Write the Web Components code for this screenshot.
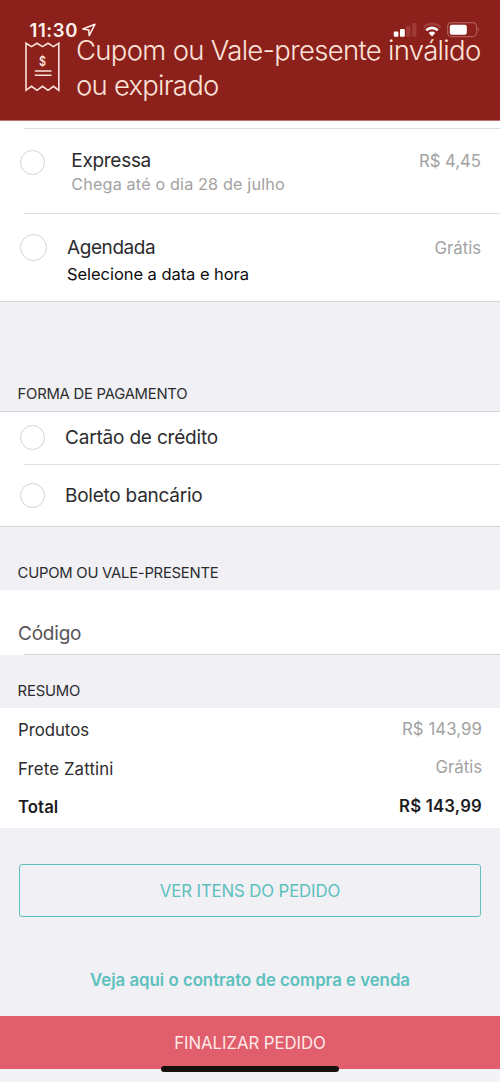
<!DOCTYPE html>
<html lang="pt-BR">
<head>
<meta charset="utf-8">
<title>Finalizar pedido</title>
<style>
html,body{margin:0;padding:0}
body{width:500px;height:1082px;overflow:hidden;background:#f0f0f5;font-family:Inter,"Liberation Sans",sans-serif;color:#2c2c2e}
</style>
</head>
<body>
<checkout-page></checkout-page>
<script>
const define = (name, html, setup) => {
  const tpl = document.createElement('template');
  tpl.innerHTML = html;
  customElements.define(name, class extends HTMLElement {
    constructor() {
      super();
      this.attachShadow({mode: 'open'}).append(tpl.content.cloneNode(true));
    }
    connectedCallback() { if (setup) setup(this, this.shadowRoot); }
  });
};

/* One line of text; "fit" is its width in px, reached by tracking. */
define('text-line', `<style>
:host{display:block;height:24px;line-height:24px;white-space:nowrap}
span{display:inline-block}
</style><span><slot></slot></span>`, (el, root) => {
  const span = root.querySelector('span');
  el.style.fontSize = el.getAttribute('size') + 'px';
  if (el.hasAttribute('weight')) el.style.fontWeight = el.getAttribute('weight');
  if (el.hasAttribute('color')) el.style.color = el.getAttribute('color');
  const fit = parseFloat(el.getAttribute('fit'));
  const n = el.textContent.length;
  span.style.letterSpacing = (fit - span.getBoundingClientRect().width) / n + 'px';
});

define('status-bar', `<style>
:host{display:flex;height:20px;padding:20px 20px 0 29.5px;align-items:flex-start}
text-line{height:20px;line-height:20px;color:#fff0ea}
.nav{margin:3px 0 0 3.5px}
.right{margin-left:auto}
svg{display:block}
</style>
<text-line size="18.5" weight="600" fit="48.5">11:30</text-line>
<svg class="nav" width="15" height="14" viewBox="0 0 15 14"><path d="M.8 6 13 1.2 7.2 12.6 6.8 6.9Z" fill="none" stroke="#fff0ea" stroke-width="1.5" stroke-linejoin="round"/></svg>
<svg class="right" width="87" height="18" viewBox="0 0 87 18">
<g fill="#fff"><rect x=".8" y="11.4" width="4.6" height="5.4" rx="1"/><rect x="7" y="9" width="4.8" height="7.8" rx="1"/></g>
<g fill="#a03c37"><rect x="13.2" y="6" width="4.3" height="10.8" rx="1"/><rect x="19.2" y="3" width="4.2" height="13.8" rx="1"/></g>
<g fill="none"><path d="M30.5 7.2Q39 .3 47.5 7.2" stroke="#a03c37" stroke-width="2.4"/><path d="M33.2 10.3Q39 5.4 44.8 10.3" stroke="#fff" stroke-width="2.5"/></g>
<path d="M35.7 12.9Q39 10.3 42.3 12.9L39 16.6Z" fill="#fff"/>
<rect x="54.6" y="2.6" width="29" height="14" rx="4" fill="none" stroke="#b05d59" stroke-width="1.2"/>
<rect x="56.8" y="4.7" width="17" height="10" rx="2" fill="#fff"/>
<path d="M85 7.6Q87 9.6 85 11.8Z" fill="#b56d69"/>
</svg>`);

define('alert-banner', `<style>
:host{display:block;height:120px;background:#8c211c;border-bottom:1px solid #bd706c}
.body{display:flex}
svg{display:block;margin:1px 0 0 24px}
.t{margin-left:15px;margin-top:-7px}
text-line{height:34px;line-height:34px;color:#fbe3da}
</style>
<status-bar></status-bar>
<div class="body">
<svg width="37" height="52" viewBox="0 0 37 52" fill="none" stroke="#fbe3da" stroke-width="1.6">
<path d="M2 49.3V2.2L7.5 5.6 13 2.2 18.5 5.6 24 2.2 29.5 5.6 34.8 2.2V49.3L29.5 45.3 24 49.3 18.5 45.3 13 49.3 7.5 45.3Z" stroke-linejoin="miter"/>
<path d="M10.8 30H27.5M10.8 34.3H27.5" stroke-width="1.4"/>
<text x="18.5" y="25" text-anchor="middle" font-size="12.5" font-weight="600" fill="#fbe3da" stroke="none" textLength="7" lengthAdjust="spacingAndGlyphs">$</text>
</svg>
<div class="t">
<text-line size="27.5" weight="300" fit="404.5">Cupom ou Vale-presente inválido</text-line>
<text-line size="27.5" weight="300" fit="142.5" style="margin-top:.5px">ou expirado</text-line>
</div></div>`);

define('radio-option', `<style>
:host{display:flex;position:relative;box-sizing:border-box;height:var(--h);padding-right:19px;align-items:flex-start}
i{box-sizing:border-box;flex:none;width:var(--d,25px);height:var(--d,25px);margin:var(--rt) 0 0 20px;border:1.4px solid #d2d2d3;border-radius:50%}
.t{margin:var(--tt) 0 0 var(--tl)}
.v{margin:var(--vt,0) 0 0 auto}
</style><i></i><div class="t"><slot></slot></div><div class="v"><slot name="value"></slot></div>`);

define('inset-line', `<style>:host{display:block;height:1px;margin-left:24px;background:#dedee1}</style>`);

define('white-panel', `<style>
:host{display:block;box-sizing:border-box;background:#fff}
:host([top]){border-top:1px solid #d5d5d9}
:host([bottom]){border-bottom:1px solid #d5d5d9}
</style><slot></slot>`);

define('section-title', `<style>
:host{display:flex;box-sizing:border-box;align-items:flex-end;padding:0 0 var(--pb) 17.6px;height:var(--h)}
</style><slot></slot>`);

define('summary-row', `<style>
:host{display:flex;justify-content:space-between;height:38.5px;padding:0 18px 0 18px}
.v{margin-top:-1.5px}
</style><slot></slot><div class="v"><slot name="value"></slot></div>`);

define('outline-button', `<style>
:host{display:block;margin:36px 19px 0}
button{display:flex;justify-content:center;align-items:center;box-sizing:border-box;width:462px;height:53px;padding:0;border:1.5px solid #65bfbd;border-radius:3px;background:none;font:inherit;color:#5cc0bd}
</style><button><slot></slot></button>`);

define('submit-bar', `<style>
:host{display:flex;justify-content:center;position:relative;box-sizing:border-box;height:53px;padding-top:15px;background:#e15e6c;color:#ffe9e9}
i{position:absolute;left:161px;top:50px;width:178px;height:6px;border-radius:3px;background:#15110f}
</style><slot></slot><i></i>`);

define('checkout-page', `<style>
:host{display:flex;flex-direction:column;width:500px;height:1082px;background:#f0f0f5}
.link{display:flex;justify-content:center;margin-top:51px;height:48px}
.code{padding:32px 0 0 18px;height:32px;box-sizing:content-box}
.tail{flex:1;background:#f3f3f7}
</style>
<alert-banner></alert-banner>
<white-panel bottom style="height:181px;padding-top:7px">
<inset-line style="background:#d6e0e2"></inset-line>
<radio-option style="--h:84px;--rt:21px;--tt:20px;--tl:26.3px;--vt:20px">
<text-line size="19" fit="79.7">Expressa</text-line>
<text-line size="16.2" fit="213.5" color="#a2a2a2" style="margin-top:-1px">Chega até o dia 28 de julho</text-line>
<text-line slot="value" size="16.8" fit="62" color="#a2a2a2">R$ 4,45</text-line>
</radio-option>
<inset-line></inset-line>
<radio-option style="--h:87px;--d:27px;--rt:20px;--tt:22px;--tl:20px;--vt:22px">
<text-line size="19" fit="88.3">Agendada</text-line>
<text-line size="16.5" fit="182" color="#0c0c0e" style="margin-top:2px">Selecione a data e hora</text-line>
<text-line slot="value" size="16.8" fit="46.5" color="#a2a2a2">Grátis</text-line>
</radio-option>
</white-panel>
<section-title style="--h:109px;--pb:5px"><text-line size="14.8" fit="169.7">FORMA DE PAGAMENTO</text-line></section-title>
<white-panel top bottom style="height:116px">
<radio-option style="--h:52px;--rt:13px;--tt:14px;--tl:20px"><text-line size="19" fit="153">Cartão de crédito</text-line></radio-option>
<inset-line></inset-line>
<radio-option style="--h:61px;--rt:18px;--tt:19px;--tl:20px"><text-line size="19" fit="137.5">Boleto bancário</text-line></radio-option>
</white-panel>
<section-title style="--h:63px;--pb:5px"><text-line size="14.8" fit="200.8">CUPOM OU VALE-PRESENTE</text-line></section-title>
<white-panel style="height:65px">
<div class="code"><text-line size="19" fit="63.3" color="#555558">Código</text-line></div>
<inset-line style="background:#d2d2d7"></inset-line>
</white-panel>
<section-title style="--h:53px;--pb:5px"><text-line size="14.8" fit="62.6">RESUMO</text-line></section-title>
<white-panel style="height:120px;padding-top:10px">
<summary-row><text-line size="16.8" fit="71">Produtos</text-line><text-line slot="value" size="16.8" fit="80" color="#a2a2a2">R$ 143,99</text-line></summary-row>
<summary-row><text-line size="16.8" fit="95.5">Frete Zattini</text-line><text-line slot="value" size="16.8" fit="46.5" color="#a2a2a2">Grátis</text-line></summary-row>
<summary-row><text-line size="16.8" weight="600" fit="40.3" color="#1c1c1e">Total</text-line><text-line slot="value" size="16.8" weight="600" fit="83" color="#1c1c1e">R$ 143,99</text-line></summary-row>
</white-panel>
<outline-button><text-line size="16.8" fit="180.3">VER ITENS DO PEDIDO</text-line></outline-button>
<div class="link"><text-line size="16.8" weight="600" fit="320" color="#5cc0bd">Veja aqui o contrato de compra e venda</text-line></div>
<submit-bar><text-line size="16.8" fit="151.5">FINALIZAR PEDIDO</text-line></submit-bar>
<div class="tail"></div>`);
</script>
</body>
</html>
